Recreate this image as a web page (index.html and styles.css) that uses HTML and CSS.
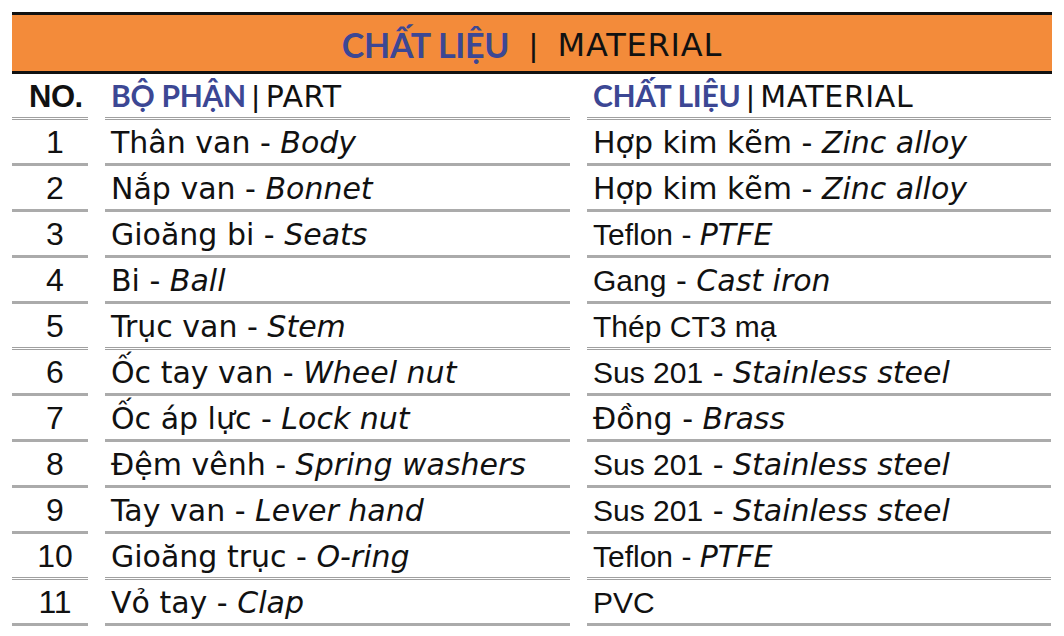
FILE: index.html
```html
<!DOCTYPE html>
<html lang="vi">
<head>
<meta charset="utf-8">
<title>Chất liệu | Material</title>
<link rel="stylesheet" href="styles.css">
</head>
<body>
<div class="sheet">
  <div class="title-bar">
    <span class="vn">CHẤT LIỆU</span><span class="sep">|</span><span class="en">MATERIAL</span>
  </div>
  <div class="table">
    <div class="cell no head"><span>NO.</span></div>
    <div class="cell head"><span><span class="vn">BỘ PHẬN</span><span class="bar">|</span><span class="en">PART</span></span></div>
    <div class="cell head"><span><span class="vn">CHẤT LIỆU</span><span class="bar">|</span><span class="en">MATERIAL</span></span></div>

    <div class="cell no"><span>1</span></div>
    <div class="cell g"><span>Thân van - <i>Body</i></span></div>
    <div class="cell g"><span>Hợp kim kẽm - <i>Zinc alloy</i></span></div>

    <div class="cell no"><span>2</span></div>
    <div class="cell g"><span>Nắp van - <i>Bonnet</i></span></div>
    <div class="cell g"><span>Hợp kim kẽm - <i>Zinc alloy</i></span></div>

    <div class="cell no"><span>3</span></div>
    <div class="cell g"><span>Gioăng bi - <i>Seats</i></span></div>
    <div class="cell a"><span>Teflon - <i>PTFE</i></span></div>

    <div class="cell no"><span>4</span></div>
    <div class="cell g"><span>Bi - <i>Ball</i></span></div>
    <div class="cell g"><span><span class="a">Gang</span> - <i>Cast iron</i></span></div>

    <div class="cell no dbl"><span>5</span></div>
    <div class="cell g dbl"><span>Trục van - <i>Stem</i></span></div>
    <div class="cell a dbl"><span>Thép CT3 mạ</span></div>

    <div class="cell no"><span>6</span></div>
    <div class="cell g"><span>Ốc tay van - <i>Wheel nut</i></span></div>
    <div class="cell g"><span><span class="a">Sus 201</span> - <i>Stainless steel</i></span></div>

    <div class="cell no"><span>7</span></div>
    <div class="cell g"><span>Ốc áp lực - <i>Lock nut</i></span></div>
    <div class="cell g"><span>Đồng - <i>Brass</i></span></div>

    <div class="cell no"><span>8</span></div>
    <div class="cell g"><span>Đệm vênh - <i>Spring washers</i></span></div>
    <div class="cell g"><span><span class="a">Sus 201</span> - <i>Stainless steel</i></span></div>

    <div class="cell no"><span>9</span></div>
    <div class="cell g"><span>Tay van - <i>Lever hand</i></span></div>
    <div class="cell g"><span><span class="a">Sus 201</span> - <i>Stainless steel</i></span></div>

    <div class="cell no dbl"><span>10</span></div>
    <div class="cell g dbl"><span>Gioăng trục - <i>O-ring</i></span></div>
    <div class="cell a dbl"><span>Teflon - <i>PTFE</i></span></div>

    <div class="cell no"><span>11</span></div>
    <div class="cell g"><span>Vỏ tay - <i>Clap</i></span></div>
    <div class="cell a"><span>PVC</span></div>
  </div>
</div>
</body>
</html>
```

FILE: styles.css
```css
* { box-sizing: border-box; }
html, body { margin: 0; padding: 0; background: #ffffff; }
body {
  width: 1064px;
  height: 636px;
  overflow: hidden;
  color: #111111;
  font-family: "DejaVu Sans", "Liberation Sans", sans-serif;
}
.sheet {
  padding: 12px 12px 0 12px;
}
.title-bar {
  height: 62px;
  background: #f38b3a;
  border-top: 3px solid #111;
  border-bottom: 3px solid #111;
  display: flex;
  align-items: center;
  justify-content: center;
  padding-top: 3px;
  font-size: 32px;
  line-height: 1;
}
.title-bar .vn {
  font-family: "Lato", "Liberation Sans", sans-serif;
  font-weight: 700;
  font-size: 34px;
  color: #3c4794;
  letter-spacing: -0.3px;
}
.title-bar .sep {
  font-family: "Liberation Sans", sans-serif;
  margin: 0 20px;
}
.title-bar .en {
  font-family: "DejaVu Sans", sans-serif;
  font-weight: 400;
  letter-spacing: 0.8px;
}
.table {
  display: grid;
  grid-template-columns: 76px 465px 464px;
  column-gap: 17px;
  grid-auto-rows: 46px;
}
.cell {
  display: flex;
  align-items: flex-end;
  padding: 0 0 5px 6px;
  border-bottom: 3px solid #ababab;
  font-size: 30px;
  line-height: 1;
  white-space: nowrap;
}
.cell.dbl { border-bottom: 3px double #a0a0a0; }
.cell.head { border-bottom: 3px double #a0a0a0; }
.cell.no {
  justify-content: center;
  padding-left: 10px;
  font-family: "Liberation Sans", sans-serif;
  font-size: 32px;
}
.cell.no.head {
  font-weight: 700;
  font-size: 31px;
  justify-content: flex-start;
  padding-left: 17px;
  letter-spacing: -0.5px;
}
.cell i { font-style: italic; }
.cell.a, .cell .a { font-family: "Liberation Sans", sans-serif; font-size: 30px; }
.cell.a i { font-family: "DejaVu Sans", sans-serif; font-size: 30px; }
.cell.head .vn {
  font-family: "Lato", "Liberation Sans", sans-serif;
  font-weight: 700;
  color: #3c4794;
  font-size: 30px;
  letter-spacing: -0.3px;
}
.cell.head .bar {
  font-family: "Liberation Sans", sans-serif;
  margin: 0 6px;
  font-size: 30px;
}
.cell.head .en {
  font-size: 30px;
  letter-spacing: 0.6px;
}
```
